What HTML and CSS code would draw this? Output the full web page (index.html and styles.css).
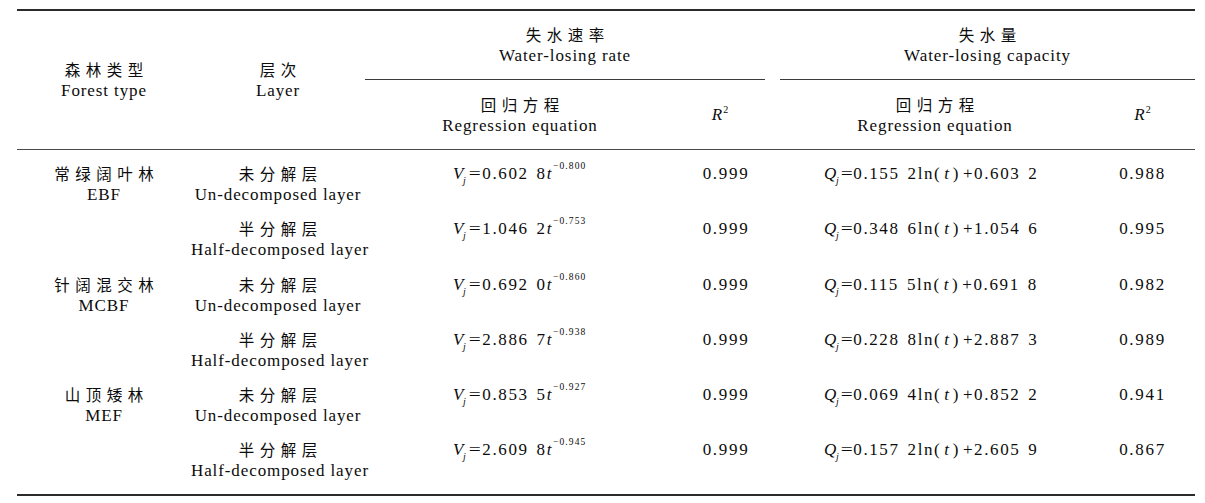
FILE: index.html
```html
<!DOCTYPE html>
<html lang="zh">
<head>
<meta charset="utf-8">
<title>失水速率与失水量回归方程</title>
<link rel="stylesheet" href="styles.css">
</head>
<body>
<table class="tbl">
  <colgroup>
    <col class="c-forest">
    <col class="c-layer">
    <col class="c-veq">
    <col class="c-r2a">
    <col class="c-gap">
    <col class="c-qeq">
    <col class="c-r2b">
  </colgroup>
  <thead>
    <tr class="h1">
      <th rowspan="2" class="hb hspan"><span class="zh">森林类型</span><span class="en">Forest type</span></th>
      <th rowspan="2" class="hb hspan"><span class="zh">层次</span><span class="en">Layer</span></th>
      <th colspan="2" class="grp"><span class="zh">失水速率</span><span class="en">Water-losing rate</span></th>
      <th rowspan="2" class="hb"></th>
      <th colspan="2" class="grp"><span class="zh">失水量</span><span class="en">Water-losing capacity</span></th>
    </tr>
    <tr class="h2">
      <th class="hb"><span class="zh">回归方程</span><span class="en">Regression equation</span></th>
      <th class="hb r2h"><i>R</i><sup class="sq">2</sup></th>
      <th class="hb"><span class="zh">回归方程</span><span class="en">Regression equation</span></th>
      <th class="hb r2h"><i>R</i><sup class="sq">2</sup></th>
    </tr>
  </thead>
  <tbody>
    <tr class="r">
      <td><span class="zh">常绿阔叶林</span><span class="en">EBF</span></td>
      <td><span class="zh">未分解层</span><span class="en">Un-decomposed layer</span></td>
      <td class="eq veq"><span class="ln"><i>V</i><sub>j</sub><span class="op">=</span>0.602<span class="sp"></span>8<i>t</i><sup>−0.800</sup></span></td>
      <td class="num na"><span class="ln">0.999</span></td>
      <td></td>
      <td class="eq qeq"><span class="ln"><i>Q</i><sub>j</sub><span class="op">=</span>0.155<span class="sp"></span>2ln(<i class="pt">t</i>)<span class="pl">+</span>0.603<span class="sp"></span>2</span></td>
      <td class="num"><span class="ln">0.988</span></td>
    </tr>
    <tr class="r">
      <td></td>
      <td><span class="zh">半分解层</span><span class="en">Half-decomposed layer</span></td>
      <td class="eq veq"><span class="ln"><i>V</i><sub>j</sub><span class="op">=</span>1.046<span class="sp"></span>2<i>t</i><sup>−0.753</sup></span></td>
      <td class="num na"><span class="ln">0.999</span></td>
      <td></td>
      <td class="eq qeq"><span class="ln"><i>Q</i><sub>j</sub><span class="op">=</span>0.348<span class="sp"></span>6ln(<i class="pt">t</i>)<span class="pl">+</span>1.054<span class="sp"></span>6</span></td>
      <td class="num"><span class="ln">0.995</span></td>
    </tr>
    <tr class="r">
      <td><span class="zh">针阔混交林</span><span class="en">MCBF</span></td>
      <td><span class="zh">未分解层</span><span class="en">Un-decomposed layer</span></td>
      <td class="eq veq"><span class="ln"><i>V</i><sub>j</sub><span class="op">=</span>0.692<span class="sp"></span>0<i>t</i><sup>−0.860</sup></span></td>
      <td class="num na"><span class="ln">0.999</span></td>
      <td></td>
      <td class="eq qeq"><span class="ln"><i>Q</i><sub>j</sub><span class="op">=</span>0.115<span class="sp"></span>5ln(<i class="pt">t</i>)<span class="pl">+</span>0.691<span class="sp"></span>8</span></td>
      <td class="num"><span class="ln">0.982</span></td>
    </tr>
    <tr class="r">
      <td></td>
      <td><span class="zh">半分解层</span><span class="en">Half-decomposed layer</span></td>
      <td class="eq veq"><span class="ln"><i>V</i><sub>j</sub><span class="op">=</span>2.886<span class="sp"></span>7<i>t</i><sup>−0.938</sup></span></td>
      <td class="num na"><span class="ln">0.999</span></td>
      <td></td>
      <td class="eq qeq"><span class="ln"><i>Q</i><sub>j</sub><span class="op">=</span>0.228<span class="sp"></span>8ln(<i class="pt">t</i>)<span class="pl">+</span>2.887<span class="sp"></span>3</span></td>
      <td class="num"><span class="ln">0.989</span></td>
    </tr>
    <tr class="r">
      <td><span class="zh">山顶矮林</span><span class="en">MEF</span></td>
      <td><span class="zh">未分解层</span><span class="en">Un-decomposed layer</span></td>
      <td class="eq veq"><span class="ln"><i>V</i><sub>j</sub><span class="op">=</span>0.853<span class="sp"></span>5<i>t</i><sup>−0.927</sup></span></td>
      <td class="num na"><span class="ln">0.999</span></td>
      <td></td>
      <td class="eq qeq"><span class="ln"><i>Q</i><sub>j</sub><span class="op">=</span>0.069<span class="sp"></span>4ln(<i class="pt">t</i>)<span class="pl">+</span>0.852<span class="sp"></span>2</span></td>
      <td class="num"><span class="ln">0.941</span></td>
    </tr>
    <tr class="r last">
      <td></td>
      <td><span class="zh">半分解层</span><span class="en">Half-decomposed layer</span></td>
      <td class="eq veq"><span class="ln"><i>V</i><sub>j</sub><span class="op">=</span>2.609<span class="sp"></span>8<i>t</i><sup>−0.945</sup></span></td>
      <td class="num na"><span class="ln">0.999</span></td>
      <td></td>
      <td class="eq qeq"><span class="ln"><i>Q</i><sub>j</sub><span class="op">=</span>0.157<span class="sp"></span>2ln(<i class="pt">t</i>)<span class="pl">+</span>2.605<span class="sp"></span>9</span></td>
      <td class="num"><span class="ln">0.867</span></td>
    </tr>
  </tbody>
</table>
</body>
</html>
```

FILE: styles.css
```css
html, body {
  margin: 0;
  padding: 0;
  background: #ffffff;
}

body {
  color: #0c0c0c;
  font-family: "Liberation Serif", "Times New Roman", serif;
  font-size: 17px;
}

.tbl {
  margin: 9px 0 0 17px;
  width: 1178px;
  table-layout: fixed;
  border-collapse: separate;
  border-spacing: 0;
  border-top: 2px solid #2b2b2b;
  border-bottom: 2px solid #2b2b2b;
}

.c-forest { width: 174px; }
.c-layer { width: 174px; }
.c-veq { width: 310px; }
.c-r2a { width: 90px; }
.c-gap { width: 15px; }
.c-qeq { width: 310px; }
.c-r2b { width: 105px; }

th, td {
  padding: 0;
  font-weight: normal;
  text-align: center;
  line-height: 21px;
  letter-spacing: 0.9px;
  white-space: nowrap;
}

/* each text line is its own fixed-height block */
.zh, .en, .ln {
  display: block;
  height: 21px;
  line-height: 21px;
  overflow: visible;
}

.zh {
  font-family: "Noto Sans CJK SC", sans-serif;
  font-size: 15.5px;
  letter-spacing: 5.5px;
  text-indent: 5.5px;
}

/* header */
.h1 { height: 69px; }
.h2 { height: 70px; }

th { vertical-align: middle; }

.grp { border-bottom: 1px solid #3a3a3a; }
.hb { border-bottom: 1.5px solid #4a4a4a; }
.hspan { padding-top: 0; }

.r2h { letter-spacing: 0; }

sup, sub {
  line-height: 0;
  font-size: 9px;
}

.sq {
  font-size: 10px;
  vertical-align: 7px;
  margin-left: 1px;
}

/* body */
.r { height: 55.3px; }
.r td {
  vertical-align: top;
  padding-top: 13px;
}
.r.last td { padding-bottom: 12.5px; }

.num { letter-spacing: 1.7px; }
.na { padding-left: 12px; }

.eq {
  text-align: left;
  letter-spacing: 1.6px;
}
.veq { padding-left: 88px; }
.qeq { padding-left: 44px; }

.eq sub {
  font-style: italic;
  font-size: 10px;
  letter-spacing: 0;
  vertical-align: -5px;
  margin-left: -2px;
}

.eq sup {
  font-size: 9.5px;
  letter-spacing: 1.1px;
  vertical-align: 10px;
  margin-left: 0;
}

.op {
  display: inline-block;
  margin: 0 3px 0 4px;
  letter-spacing: 0;
  transform: scaleX(1.25);
}

.qeq .op {
  margin: 0 2px 0 3px;
}

.sp {
  display: inline-block;
  width: 8px;
}

.pt {
  margin: 0 2px 0 3px;
}

.pl {
  margin-left: 3px;
}
```
